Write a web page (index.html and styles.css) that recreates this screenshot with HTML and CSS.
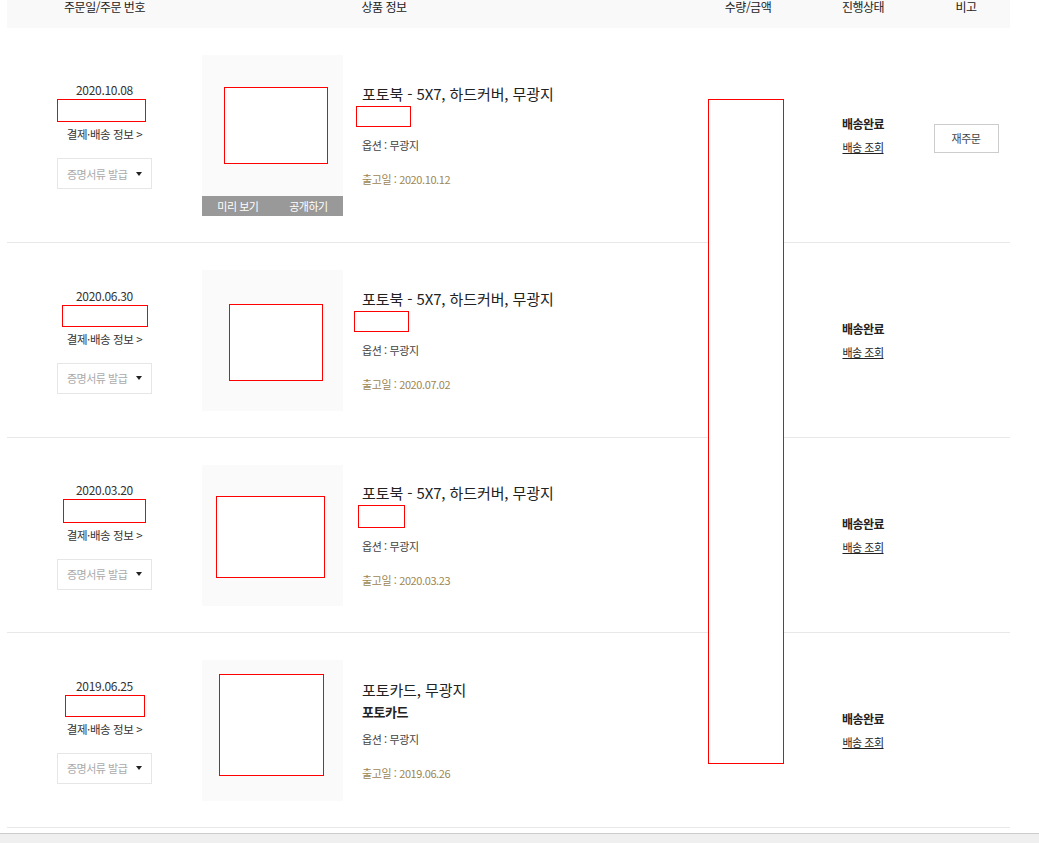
FILE: index.html
```html
<!DOCTYPE html>
<html lang="ko">
<head>
	<meta charset="utf-8" />
	<title>주문 내역</title>
	<link rel="stylesheet" href="styles.css">
</head>
<body>
<div id="orders">
	<div class="head">
		<div class="c-date">주문일/주문 번호</div>
		<div class="c-prod">상품 정보</div>
		<div class="c-amt">수량/금액</div>
		<div class="c-state">진행상태</div>
		<div class="c-etc">비고</div>
	</div>

	<!-- 1 -->
	<div class="row">
		<div class="c-date">
			<p class="date">2020.10.08</p>
			<span class="hide no1"></span>
			<a class="pay">결제·배송 정보 &gt;</a>
			<button class="doc">증명서류 발급 <span class="caret"></span></button>
		</div>
		<div class="c-prod">
			<div class="thumb-wrap">
				<div class="thumb"><span class="hide img1"></span></div>
				<div class="preview"><span>미리 보기</span><span>공개하기</span></div>
			</div>
			<div class="info">
				<p class="name">포토북 - 5X7, 하드커버, 무광지</p>
				<span class="hide t1"></span>
				<p class="opt">옵션 : 무광지</p>
				<p class="ship">출고일 : 2020.10.12</p>
			</div>
		</div>
		<div class="c-amt"></div>
		<div class="c-state">
			<p class="done">배송완료</p>
			<a class="track">배송 조회</a>
		</div>
		<div class="c-etc"><button class="again">재주문</button></div>
	</div>

	<!-- 2 -->
	<div class="row">
		<div class="c-date">
			<p class="date">2020.06.30</p>
			<span class="hide no2"></span>
			<a class="pay">결제·배송 정보 &gt;</a>
			<button class="doc">증명서류 발급 <span class="caret"></span></button>
		</div>
		<div class="c-prod">
			<div class="thumb-wrap">
				<div class="thumb"><span class="hide img2"></span></div>
			</div>
			<div class="info">
				<p class="name">포토북 - 5X7, 하드커버, 무광지</p>
				<span class="hide t2"></span>
				<p class="opt">옵션 : 무광지</p>
				<p class="ship">출고일 : 2020.07.02</p>
			</div>
		</div>
		<div class="c-amt"></div>
		<div class="c-state">
			<p class="done">배송완료</p>
			<a class="track">배송 조회</a>
		</div>
		<div class="c-etc"></div>
	</div>

	<!-- 3 -->
	<div class="row">
		<div class="c-date">
			<p class="date">2020.03.20</p>
			<span class="hide no3"></span>
			<a class="pay">결제·배송 정보 &gt;</a>
			<button class="doc">증명서류 발급 <span class="caret"></span></button>
		</div>
		<div class="c-prod">
			<div class="thumb-wrap">
				<div class="thumb"><span class="hide img3"></span></div>
			</div>
			<div class="info">
				<p class="name">포토북 - 5X7, 하드커버, 무광지</p>
				<span class="hide t3"></span>
				<p class="opt">옵션 : 무광지</p>
				<p class="ship">출고일 : 2020.03.23</p>
			</div>
		</div>
		<div class="c-amt"></div>
		<div class="c-state">
			<p class="done">배송완료</p>
			<a class="track">배송 조회</a>
		</div>
		<div class="c-etc"></div>
	</div>

	<!-- 4 -->
	<div class="row">
		<div class="c-date">
			<p class="date">2019.06.25</p>
			<span class="hide no4"></span>
			<a class="pay">결제·배송 정보 &gt;</a>
			<button class="doc">증명서류 발급 <span class="caret"></span></button>
		</div>
		<div class="c-prod">
			<div class="thumb-wrap">
				<div class="thumb"><span class="hide img4"></span></div>
			</div>
			<div class="info">
				<p class="name">포토카드, 무광지</p>
				<p class="sub">포토카드</p>
				<p class="opt">옵션 : 무광지</p>
				<p class="ship">출고일 : 2019.06.26</p>
			</div>
		</div>
		<div class="c-amt"></div>
		<div class="c-state">
			<p class="done">배송완료</p>
			<a class="track">배송 조회</a>
		</div>
		<div class="c-etc"></div>
	</div>

	<span class="hide amount"></span>
</div>
<div id="bottom"></div>
</body>
</html>
```

FILE: styles.css
```css
body {
	margin: 0;
	background-color: #fff;
	font-family: "Noto Sans CJK KR", "Noto Sans", sans-serif;
	color: #222;
}
p {
	margin: 0;
}
#orders {
	position: relative;
	width: 1003px;
	margin-left: 7px;
}
.head,
.row {
	display: grid;
	grid-template-columns: 195px 490px 112px 118px 88px;
}
.head {
	height: 28px;
	background-color: #f9f9f9;
	font-size: 12px;
	line-height: 14px;
	letter-spacing: -0.5px;
	text-align: center;
}
.head .c-prod {
	padding-right: 126px;
}
.row {
	align-items: center;
	padding: 27px 0 26px;
	border-bottom: 1px solid #e8e8e8;
}
.row .c-date {
	display: flex;
	flex-direction: column;
	align-items: center;
}
.date {
	font-size: 12px;
	line-height: 16px;
	letter-spacing: -0.3px;
	color: #333;
}
.hide {
	display: block;
	border: 1px solid #f00;
	box-sizing: border-box;
	background-color: #fff;
}
.no1 { width: 89px; height: 23px; margin: 1px 6px 0 0; }
.no2 { width: 86px; height: 22px; margin-top: 1px; }
.no3 { width: 83px; height: 24px; margin-top: 1px; }
.no4 { width: 80px; height: 22px; margin-top: 1px; }
.pay {
	margin-top: 4px;
	font-size: 11.5px;
	line-height: 16px;
	letter-spacing: -0.4px;
	color: #333;
}
.doc {
	display: flex;
	align-items: center;
	width: 95px;
	height: 31px;
	margin-top: 16px;
	padding: 0 0 0 9px;
	border: 1px solid #e6e6e6;
	background-color: #fff;
	font-family: inherit;
	font-size: 11px;
	letter-spacing: -0.5px;
	color: #aaa;
}
.caret {
	margin-left: 9px;
	border-left: 3px solid transparent;
	border-right: 3px solid transparent;
	border-top: 4px solid #222;
}
.row .c-prod {
	display: flex;
	align-items: center;
}
.thumb {
	display: flex;
	align-items: center;
	justify-content: center;
	width: 141px;
	height: 141px;
	background-color: #fafafa;
}
.img1 { width: 104px; height: 77px; margin-left: 7px; }
.img2 { width: 94px; height: 77px; margin: 3px 0 0 7px; }
.img3 { width: 109px; height: 82px; margin: 2px 0 0 -5px; }
.img4 { width: 105px; height: 102px; margin: -11px 0 0 -2px; }
.preview {
	display: flex;
	justify-content: space-around;
	height: 20px;
	background-color: #999;
	font-size: 11px;
	line-height: 20px;
	letter-spacing: -0.5px;
	color: #fff;
}
.info {
	margin-left: 19px;
}
.name {
	font-size: 15px;
	line-height: 20px;
	letter-spacing: -0.1px;
}
.t1 { width: 55px; height: 21px; margin: 2px 0 0 -6px; }
.t2 { width: 55px; height: 21px; margin: 2px 0 0 -8px; }
.t3 { width: 47px; height: 23px; margin: 2px 0 0 -4px; }
.sub {
	margin-top: 3px;
	font-size: 13px;
	font-weight: bold;
	line-height: 18px;
	letter-spacing: -0.5px;
}
.opt {
	margin-top: 10px;
	font-size: 11px;
	line-height: 16px;
	letter-spacing: -0.4px;
	color: #444;
}
.ship {
	margin-top: 18px;
	font-size: 11px;
	line-height: 16px;
	letter-spacing: -0.4px;
	color: #9c8754;
}
.row .c-state {
	text-align: center;
}
.done {
	font-size: 12px;
	font-weight: bold;
	line-height: 18px;
	letter-spacing: -0.5px;
}
.track {
	display: inline-block;
	margin-top: 5px;
	font-size: 11px;
	line-height: 14px;
	letter-spacing: -0.5px;
	color: #222;
	text-decoration: underline;
}
.row .c-etc {
	text-align: center;
}
.again {
	width: 65px;
	height: 29px;
	margin-top: 5px;
	padding: 0;
	border: 1px solid #ccc;
	background-color: #fff;
	font-family: inherit;
	font-size: 11px;
	letter-spacing: -0.5px;
	color: #444;
}
.amount {
	position: absolute;
	left: 701px;
	top: 99px;
	width: 76px;
	height: 665px;
}
#bottom {
	height: 9px;
	margin-top: 5px;
	border-top: 1px solid #ccc;
	background-color: #efefef;
}
```
